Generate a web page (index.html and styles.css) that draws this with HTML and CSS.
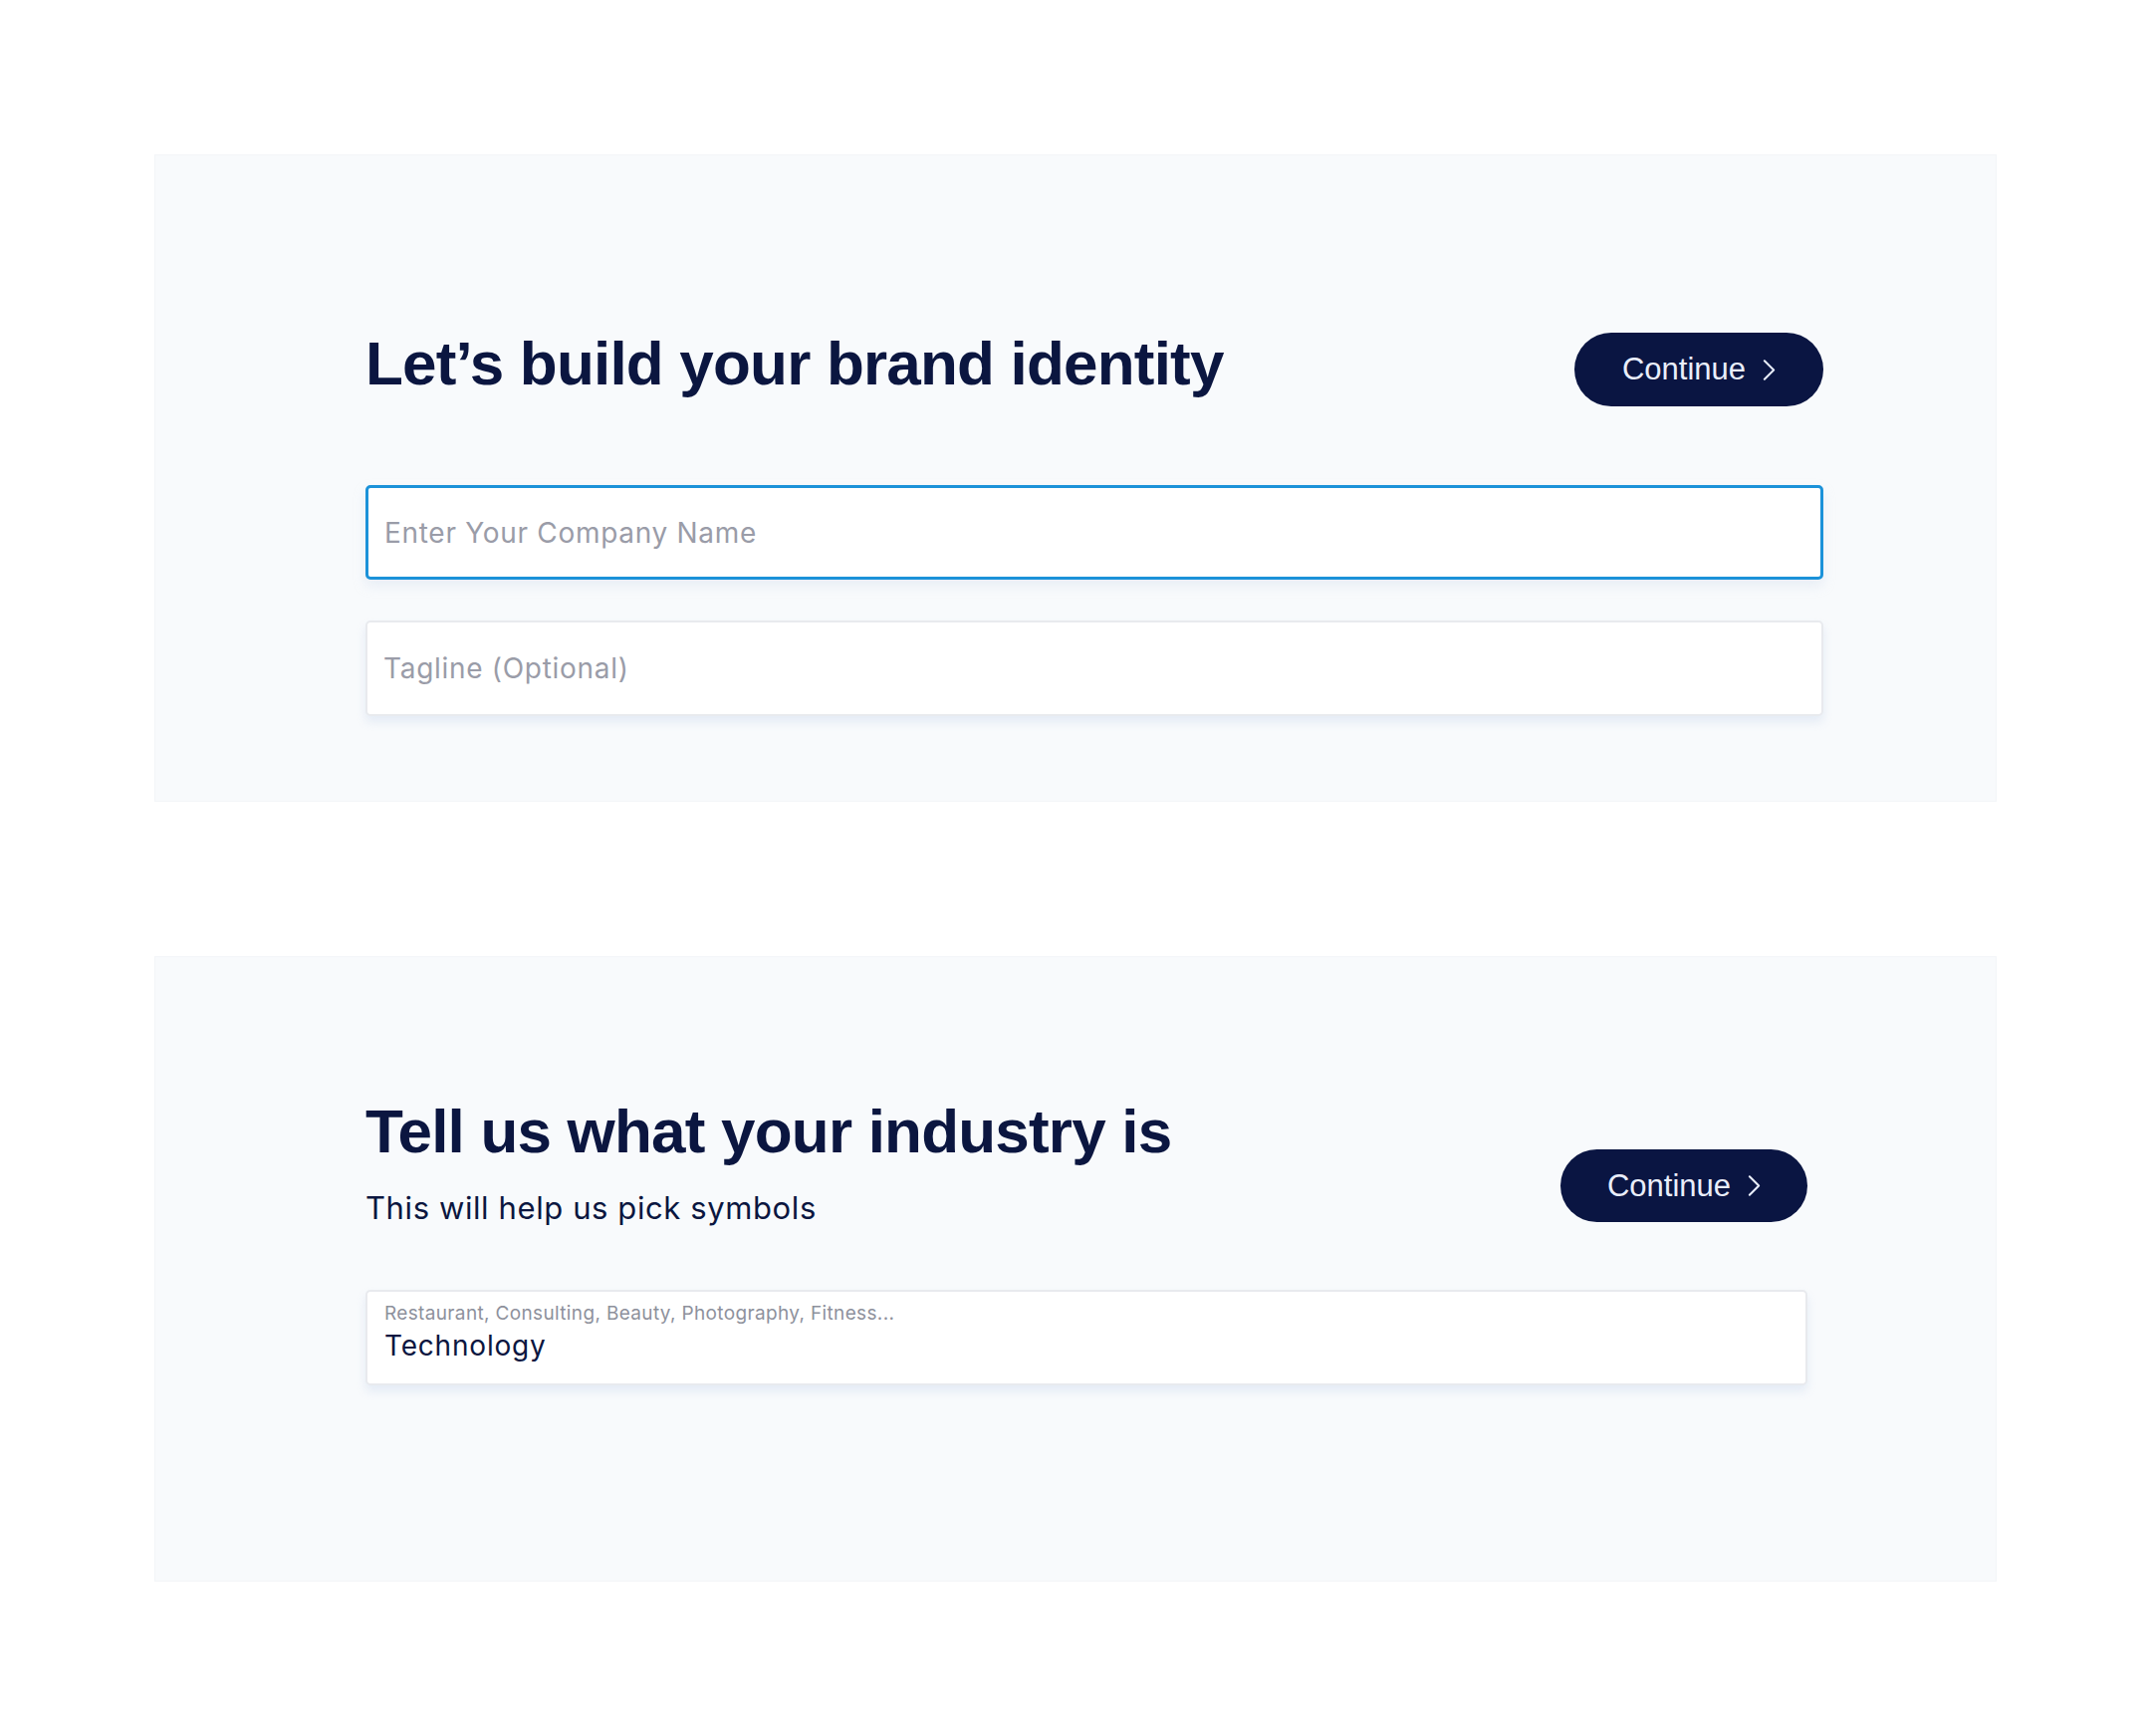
FILE: index.html
```html
<!DOCTYPE html>
<html lang="en">
<head>
<meta charset="utf-8">
<title>Brand identity</title>
<link rel="stylesheet" href="styles.css">
</head>
<body>
<main class="page">
  <section class="card card-brand">
    <div class="inner inner-brand">
      <div class="head-row">
        <h1 class="title">Let’s build your brand identity</h1>
        <button class="btn" type="button">Continue
          <svg class="chev" viewBox="0 0 14 24" width="14" height="24"><polyline points="2,2 12,12 2,22" fill="none" stroke="currentColor" stroke-width="2.2" stroke-linecap="round" stroke-linejoin="round"/></svg>
        </button>
      </div>
      <div class="field field-focus"><span class="ph">Enter Your Company Name</span></div>
      <div class="field field-plain"><span class="ph">Tagline (Optional)</span></div>
    </div>
  </section>

  <section class="card card-industry">
    <div class="inner inner-industry">
      <div class="head-row head-row-end">
        <div class="head-text">
          <h1 class="title">Tell us what your industry is</h1>
          <p class="sub">This will help us pick symbols</p>
        </div>
        <button class="btn btn-low" type="button">Continue
          <svg class="chev" viewBox="0 0 14 24" width="14" height="24"><polyline points="2,2 12,12 2,22" fill="none" stroke="currentColor" stroke-width="2.2" stroke-linecap="round" stroke-linejoin="round"/></svg>
        </button>
      </div>
      <div class="field field-plain field-stack">
        <span class="label">Restaurant, Consulting, Beauty, Photography, Fitness...</span>
        <span class="value">Technology</span>
      </div>
    </div>
  </section>
</main>
</body>
</html>
```

FILE: styles.css
```css
* { box-sizing: border-box; }
html, body { margin: 0; padding: 0; background: #ffffff; }
body { font-family: "Inter", "Liberation Sans", sans-serif; color: #0b1640; }

.page {
  padding: 155px 0 0 155px;
  display: flex;
  flex-direction: column;
  gap: 155px;
}

.card {
  width: 1850px;
  background: #f8fafc;
  border: 1px solid #f3f5f8;
}
.card-brand { padding: 178px 0 85px 211px; }
.card-industry { padding: 144px 0 196px 211px; }

.inner-brand { width: 1464px; }
.inner-industry { width: 1448px; }

.head-row {
  display: flex;
  justify-content: space-between;
  align-items: flex-start;
  margin-bottom: 79px;
}
.head-row-end { align-items: flex-end; margin-bottom: 64px; }

.title {
  margin: 0;
  font-family: "Liberation Sans", Arial, sans-serif;
  font-weight: 700;
  font-size: 62px;
  line-height: 1;
  letter-spacing: -0.8px;
  color: #0b1640;
}
.sub {
  margin: 28px 0 0 0;
  font-family: "Inter", sans-serif;
  font-size: 31px;
  line-height: 36px;
  font-weight: 400;
  letter-spacing: 0.6px;
  color: #0b1640;
}

.btn {
  display: flex;
  align-items: center;
  justify-content: center;
  gap: 17px;
  width: 250px;
  height: 74px;
  border: 0;
  border-radius: 37px;
  background: #0a1542;
  color: #e9eefb;
  font-family: "Liberation Sans", Arial, sans-serif;
  font-size: 31px;
  padding: 0;
  cursor: pointer;
}
.btn-low { width: 248px; height: 73px; margin-bottom: 4px; }
.chev { width: 13px; height: 23px; }

.field {
  height: 95px;
  background: #ffffff;
  border-radius: 5px;
  display: flex;
  align-items: center;
  padding: 0 16px;
}
.field-focus {
  border: 3px solid #1b92d9;
  box-shadow: 0 6px 12px rgba(200, 215, 235, 0.35);
  margin-bottom: 41px;
}
.field-plain {
  border: 2px solid #e8eaee;
  box-shadow: 0 6px 10px rgba(205, 218, 238, 0.45);
  height: 96px;
}
.ph {
  font-family: "Inter", sans-serif;
  font-size: 28px;
  letter-spacing: 0.7px;
  color: #9a9ca8;
}
.field-stack {
  flex-direction: column;
  align-items: flex-start;
  justify-content: flex-start;
  padding-top: 10px;
  padding-left: 17px;
}
.label {
  font-family: "Inter", sans-serif;
  font-size: 19px;
  line-height: 24px;
  letter-spacing: 0.35px;
  color: #8e919c;
}
.value {
  margin-top: 4px;
  font-family: "Inter", sans-serif;
  font-size: 28px;
  line-height: 33px;
  letter-spacing: 0.8px;
  color: #0b1640;
}
```
